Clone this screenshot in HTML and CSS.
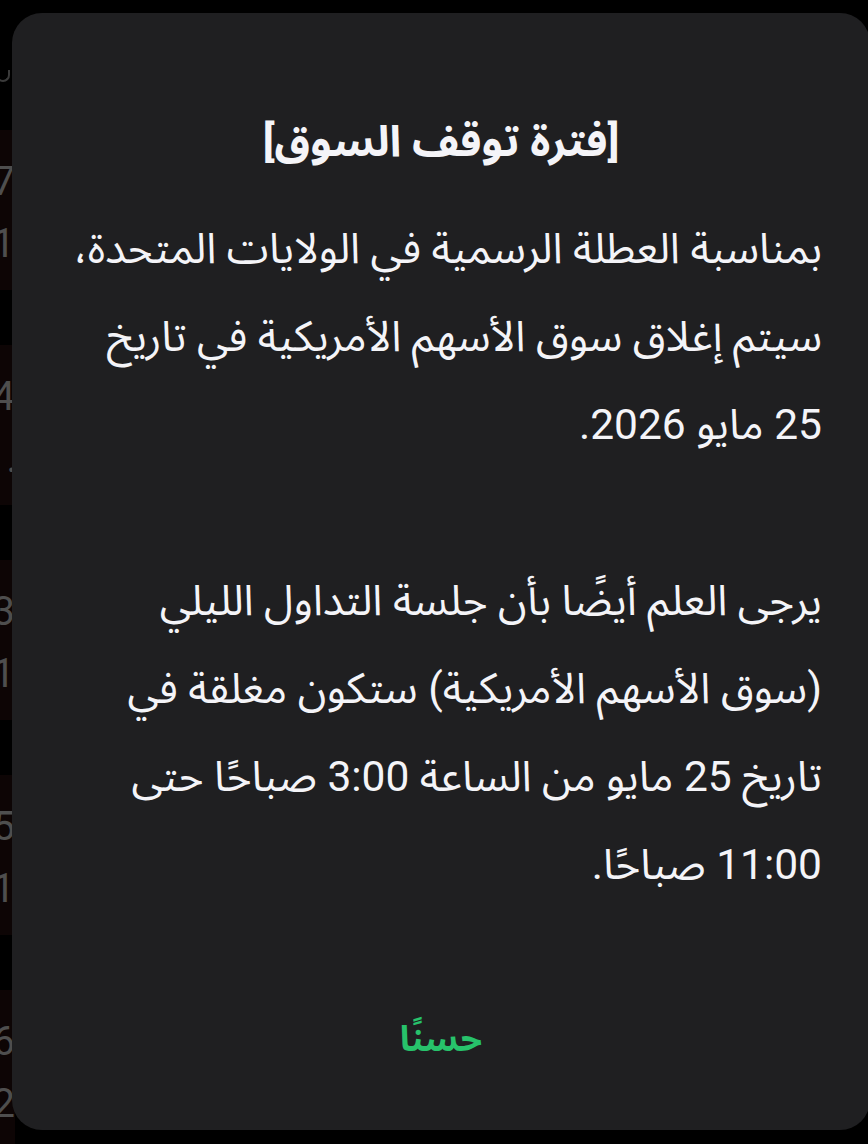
FILE: index.html
```html
<!DOCTYPE html>
<html lang="ar">
<head>
<meta charset="utf-8">
<title>فترة توقف السوق</title>
<link rel="stylesheet" href="styles.css">
</head>
<body>
<div class="screen">
  <div class="backdrop" aria-hidden="true">
    <div class="top-gap"><span class="arc"></span></div>
    <div class="row"><span>167</span><span>1.21</span></div>
    <div class="row"><span>134</span><span class="dot">.</span></div>
    <div class="row"><span>23</span><span>11</span></div>
    <div class="row"><span>15</span><span>11</span></div>
    <div class="row"><span>26</span><span>12</span></div>
  </div>

  <div class="dialog" role="dialog">
    <h1 class="title" dir="rtl">[فترة توقف السوق]</h1>
    <div class="body" dir="rtl">
      <p class="line">بمناسبة العطلة الرسمية في الولايات المتحدة،</p>
      <p class="line">سيتم إغلاق سوق الأسهم الأمريكية في تاريخ</p>
      <p class="line">25 مايو 2026.</p>
      <p class="line blank">&nbsp;</p>
      <p class="line">يرجى العلم أيضًا بأن جلسة التداول الليلي</p>
      <p class="line">(سوق الأسهم الأمريكية) ستكون مغلقة في</p>
      <p class="line">تاريخ 25 مايو من الساعة 3:00 صباحًا حتى</p>
      <p class="line">11:00 صباحًا.</p>
    </div>
    <div class="actions">
      <button class="ok" dir="rtl">حسنًا</button>
    </div>
  </div>
</div>
</body>
</html>
```

FILE: styles.css
```css
* { box-sizing: border-box; }

html, body {
  margin: 0;
  padding: 0;
  background: #000;
}

.screen {
  position: relative;
  width: 868px;
  height: 1144px;
  overflow: hidden;
  background: #000;
  font-family: Roboto, "Noto Sans Arabic", "Noto Sans Arabic UI", "Noto Naskh Arabic", "DejaVu Sans", sans-serif;
}

/* background list peeking out on the left */
.backdrop {
  display: flex;
  flex-direction: column;
  width: 15px;
  gap: 55px;
}

.top-gap {
  height: 75px;
  position: relative;
}

.arc {
  position: absolute;
  left: -4px;
  top: 70px;
  width: 14px;
  height: 12px;
  border: 2px solid #3a3a3a;
  border-top: none;
  border-radius: 0 0 8px 8px;
}

.row {
  height: 160px;
  background: #0d0505;
  display: flex;
  flex-direction: column;
  align-items: flex-end;
  padding-top: 30px;
  gap: 18px;
  color: #4e4e4e;
  font-size: 40px;
  line-height: 44px;
  white-space: nowrap;
}

.dot { margin-right: -2px; }

.dialog {
  position: absolute;
  left: 12px;
  top: 13px;
  width: 858px;
  height: 1117px;
  background: #1f1f21;
  border-radius: 30px;
  display: flex;
  flex-direction: column;
  padding: 96px 48px 0 48px;
  color: #f4f4f8;
}

.title {
  margin: 0;
  font-size: 43px;
  font-weight: 700;
  line-height: 64px;
  text-align: center;
}

.body {
  margin-top: 32px;
  font-size: 42.5px;
  line-height: 88px;
  text-align: right;
}

.line {
  margin: 0;
  white-space: nowrap;
}

.actions {
  margin-top: 106px;
  display: flex;
  justify-content: center;
}

.ok {
  background: none;
  border: none;
  padding: 0;
  font-family: inherit;
  font-size: 35px;
  font-weight: 700;
  line-height: 50px;
  color: #27c26b;
}
```
